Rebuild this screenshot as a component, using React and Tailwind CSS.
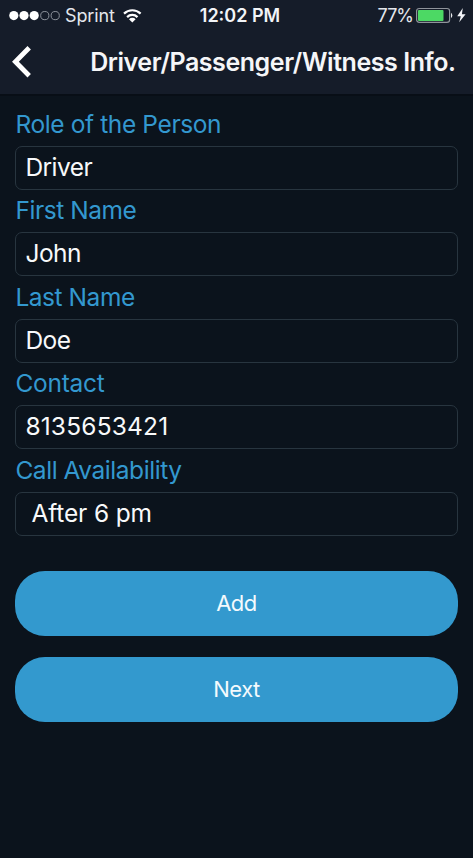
const fields = [
  { label: 'Role of the Person', value: 'Driver', labelTracking: 'tracking-[-0.38px]', tracking: 'tracking-[-0.55px]' },
  { label: 'First Name', value: 'John', labelTracking: 'tracking-[-0.45px]', tracking: 'tracking-[-0.5px]' },
  { label: 'Last Name', value: 'Doe', labelTracking: 'tracking-[-0.45px]', tracking: 'tracking-[-0.5px]' },
  { label: 'Contact', value: '8135653421', labelTracking: 'tracking-[-0.25px]', tracking: 'tracking-[0.18px]' },
  { label: 'Call Availability', value: 'After 6 pm', labelTracking: 'tracking-[-0.45px]', tracking: 'tracking-[-0.15px]', inset: true },
];

function StatusBar() {
  return (
    <div className="grid h-8 grid-cols-[157px_1fr_150px] items-center text-[18px] leading-8 text-[#e4e7ec]">
      <div className="flex items-center pl-2">
        <svg width="54" height="12" viewBox="0 0 54 12" className="shrink-0">
          <g fill="#fff">
            <circle cx="5.8" cy="5.6" r="4.6" />
            <circle cx="16" cy="5.6" r="4.6" />
            <circle cx="26.2" cy="5.6" r="4.6" />
          </g>
          <g fill="none" stroke="#8d939c" strokeWidth="1">
            <circle cx="36.8" cy="5.6" r="4.1" />
            <circle cx="47.2" cy="5.6" r="4.1" />
          </g>
        </svg>
        <span className="ml-[3px] tracking-[-0.1px]">Sprint</span>
        <svg width="20" height="15" viewBox="0 0 20 15" className="ml-2 shrink-0" fill="none" stroke="#fff" strokeWidth="2.2">
          <path d="M1 4.6A12 12 0 0 1 17.6 4.6" />
          <path d="M4.1 8.1A7.4 7.4 0 0 1 14.5 8.1" />
          <path d="M9.3 13.4L6 10.3A4.4 4.4 0 0 1 12.6 10.3Z" fill="#fff" stroke="none" />
        </svg>
      </div>
      <span className="text-center font-semibold text-[#f2f4f7]">12:02 PM</span>
      <div className="flex items-center justify-end pr-[6px]">
        <span className="tracking-[-1px]">77%</span>
        <svg width="52" height="18" viewBox="0 0 52 18" className="ml-[2px] shrink-0">
          <rect x="1.6" y="1.5" width="33" height="13.8" rx="2.6" fill="none" stroke="#8f949b" strokeWidth="1.2" />
          <rect x="3" y="2.9" width="25.5" height="11" rx="1" fill="#4cd964" />
          <path d="M36 5.8A3.2 3.2 0 0 1 36 11Z" fill="#e6e8eb" />
          <path d="M47.8 1L42.2 9.2H45.8L44.2 15.2L50.6 7.2H46.9Z" fill="#f2f4f7" />
        </svg>
      </div>
    </div>
  );
}

function Field({ label, value, labelTracking, tracking, inset }) {
  return (
    <div className="h-[86.5px]">
      <label className={`block h-[43px] pl-[0.4px] text-[24.5px] leading-[43px] whitespace-nowrap text-[#3398cf] ${labelTracking}`}>{label}</label>
      <div className={`h-[44px] rounded-[7px] border border-[#28353f] text-[24.5px] leading-[40px] whitespace-nowrap text-[#f8f9fa] ${tracking} ${inset ? 'pl-[15.5px]' : 'pl-[9.4px]'}`}>
        {value}
      </div>
    </div>
  );
}

function PillButton({ children }) {
  return (
    <button className="block h-[65px] w-full rounded-[30px] bg-[#3399ce] text-[22px] leading-[65px] tracking-[-0.5px] text-[#f4fafd]">
      {children}
    </button>
  );
}

export default function App() {
  return (
    <div className="flex h-[858px] w-full flex-col overflow-hidden bg-[#0b131c] font-['Inter',sans-serif]">
      <header className="h-[94px] shrink-0 bg-[#151c29]">
        <StatusBar />
        <div className="flex h-[60px] items-center">
          <svg width="34" height="34" viewBox="0 0 34 34" className="shrink-0" fill="none" stroke="#fff" strokeWidth="4.8">
            <path d="M29.2 2.8L15.4 16.8L29.2 30.8" />
          </svg>
          <h1 className="ml-auto pr-[17.5px] text-[25px] leading-[60px] font-[560] tracking-[-0.44px] whitespace-nowrap text-[#f5f6f8]">
            Driver/Passenger/Witness Info.
          </h1>
        </div>
      </header>
      <div className="h-[2px] shrink-0 bg-[#080e16]" />
      <main className="px-[15px] pt-[6.5px]">
        {fields.map((f) => (
          <Field key={f.label} {...f} />
        ))}
        <div className="flex flex-col gap-[21px] pt-[36px]">
          <PillButton>Add</PillButton>
          <PillButton>Next</PillButton>
        </div>
      </main>
    </div>
  );
}
